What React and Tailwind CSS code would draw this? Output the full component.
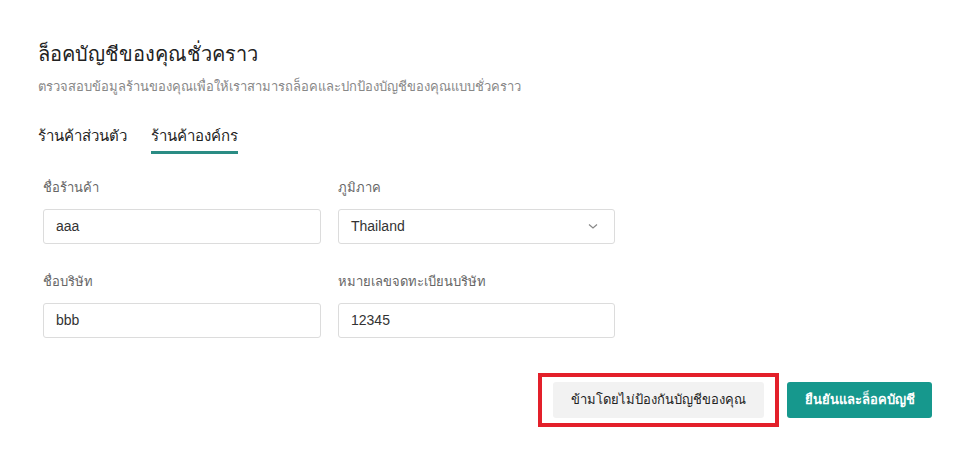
import React from "react";

const Field = ({ label, value, select }) => (
  <div className="flex flex-col">
    <label className="text-[13px] text-[#666] mb-[12px] leading-[18px]">{label}</label>
    <div className="h-[35px] border border-[#dcdcdc] rounded-[3px] bg-white flex items-center justify-between px-[12px] text-[14px] text-[#333]">
      <span>{value}</span>
      {select && (
        <svg width="12" height="12" viewBox="0 0 12 12" className="mr-[3px] text-[#888]">
          <path d="M2 4.5l4 3.5 4-3.5" fill="none" stroke="currentColor" strokeWidth="1.2" />
        </svg>
      )}
    </div>
  </div>
);

export default function App() {
  return (
    <div
      className="w-[972px] h-[452px] bg-white relative"
      style={{ fontFamily: "'Liberation Sans', 'Noto Sans', 'DejaVu Sans', sans-serif" }}
    >
      <div className="pt-[40px] pl-[38px]">
        {/* Header */}
        <h1 className="text-[20px] leading-[28px] text-[#222]">ล็อคบัญชีของคุณชั่วคราว</h1>
        <p className="mt-[10px] text-[13px] leading-[18px] text-[#888]">
          ตรวจสอบข้อมูลร้านของคุณเพื่อให้เราสามารถล็อคและปกป้องบัญชีของคุณแบบชั่วคราว
        </p>

        {/* Tabs */}
        <div className="mt-[29px] flex gap-[24px] text-[15px] text-[#222]">
          <div className="pb-[3px]">ร้านค้าส่วนตัว</div>
          <div className="pb-[3px] border-b-[3px] border-[#2a8c84]">ร้านค้าองค์กร</div>
        </div>

        {/* Form */}
        <div className="mt-[25px] ml-[5px] grid grid-cols-[278px_277px] gap-x-[17px] gap-y-[29px]">
          <Field label="ชื่อร้านค้า" value="aaa" />
          <Field label="ภูมิภาค" value="Thailand" select />
          <Field label="ชื่อบริษัท" value="bbb" />
          <Field label="หมายเลขจดทะเบียนบริษัท" value="12345" />
        </div>
      </div>

      {/* Actions */}
      <div className="absolute left-[538px] top-[373px] flex items-center">
        <div className="border-[4px] border-[#e3202a] px-[11px] py-[5px]">
          <button className="h-[36px] w-[211px] bg-[#f2f2f2] rounded-[3px] text-[13px] text-[#222]">
            ข้ามโดยไม่ป้องกันบัญชีของคุณ
          </button>
        </div>
        <button className="ml-[8px] h-[36px] w-[145px] bg-[#16988d] rounded-[3px] text-[13px] font-bold text-white">
          ยืนยันและล็อคบัญชี
        </button>
      </div>
    </div>
  );
}
